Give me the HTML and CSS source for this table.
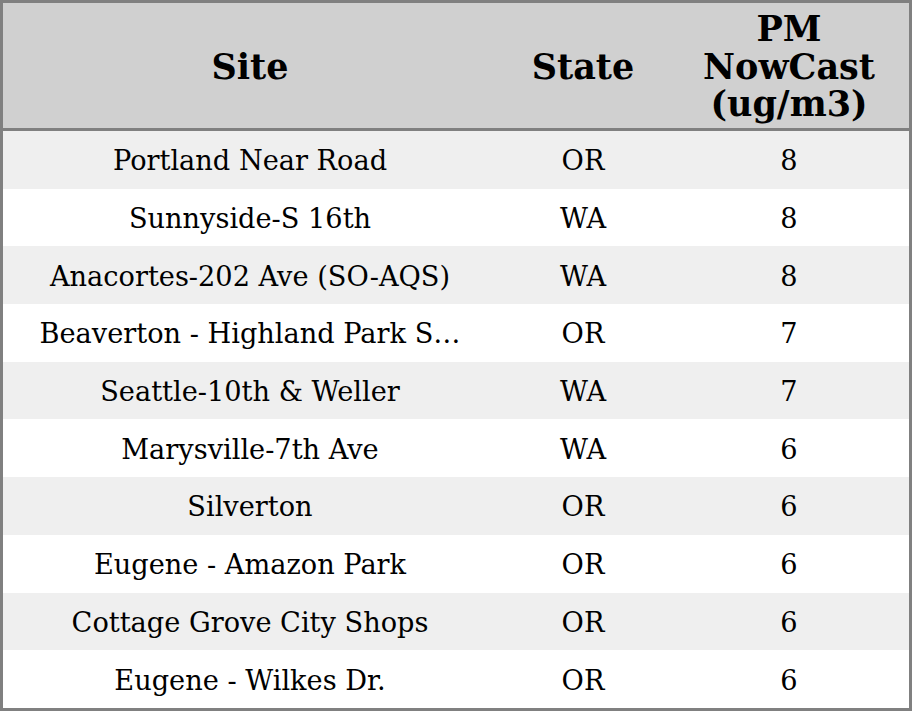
FILE: index.html
```html
<!DOCTYPE html>
<html lang="en">
<head>
<meta charset="utf-8">
<title>PM NowCast</title>
<link rel="stylesheet" href="styles.css">
</head>
<body>
<table class="aq-table">
  <colgroup>
    <col class="col-site">
    <col class="col-state">
    <col class="col-pm">
  </colgroup>
  <thead>
    <tr class="head-row">
      <th>Site</th>
      <th>State</th>
      <th>PM<br>NowCast<br>(ug/m3)</th>
    </tr>
  </thead>
  <tbody>
    <tr class="row alt"><td>Portland Near Road</td><td>OR</td><td>8</td></tr>
    <tr class="row"><td>Sunnyside-S 16th</td><td>WA</td><td>8</td></tr>
    <tr class="row alt"><td>Anacortes-202 Ave (SO-AQS)</td><td>WA</td><td>8</td></tr>
    <tr class="row"><td>Beaverton - Highland Park S…</td><td>OR</td><td>7</td></tr>
    <tr class="row alt"><td>Seattle-10th &amp; Weller</td><td>WA</td><td>7</td></tr>
    <tr class="row"><td>Marysville-7th Ave</td><td>WA</td><td>6</td></tr>
    <tr class="row alt"><td>Silverton</td><td>OR</td><td>6</td></tr>
    <tr class="row"><td>Eugene - Amazon Park</td><td>OR</td><td>6</td></tr>
    <tr class="row alt"><td>Cottage Grove City Shops</td><td>OR</td><td>6</td></tr>
    <tr class="row"><td>Eugene - Wilkes Dr.</td><td>OR</td><td>6</td></tr>
  </tbody>
</table>
</body>
</html>
```
FILE: styles.css
```css
html, body {
  margin: 0;
  padding: 0;
  background: #ffffff;
}

.aq-table {
  width: 912px;
  height: 711px;
  border-collapse: separate;
  border-spacing: 0;
  border: 3px solid #808080;
  table-layout: fixed;
  font-family: "DejaVu Serif", serif;
  color: #000000;
}

.col-site { width: 494px; }
.col-state { width: 172px; }
.col-pm { width: 240px; }

.head-row th {
  height: 128px;
  padding: 2px 0 0;
  box-sizing: border-box;
  background: #d0d0d0;
  border-bottom: 3px solid #808080;
  font-size: 35px;
  font-weight: bold;
  line-height: 37.5px;
  text-align: center;
  vertical-align: middle;
}

.row td {
  height: 57.7px;
  padding: 3px 0 0;
  box-sizing: border-box;
  font-size: 27.2px;
  line-height: 32px;
  text-align: center;
  vertical-align: middle;
  white-space: nowrap;
  overflow: hidden;
  background: #ffffff;
}

.row.alt td {
  background: #efefef;
}
```
